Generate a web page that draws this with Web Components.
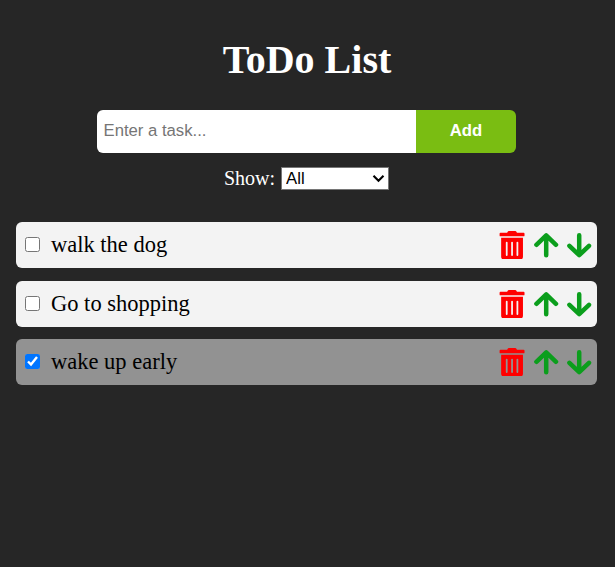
<!DOCTYPE html>
<html lang="en">
<head>
<meta charset="utf-8">
<title>ToDo List</title>
<style>
body{margin:0;background:#262626;font-family:"Liberation Serif","Times New Roman",serif}
todo-item[done]{margin-top:-1px}
</style>
</head>
<body>
<todo-app>
  <todo-item>walk the dog</todo-item>
  <todo-item>Go to shopping</todo-item>
  <todo-item done>wake up early</todo-item>
</todo-app>
<script>
class TodoIcon extends HTMLElement {
  connectedCallback() {
    const shapes = {
      trash: '<svg width="26" height="28.5" viewBox="10 0 466 512" fill="#f00"><path transform="translate(20)" d="M28 464a48 48 0 0 0 48 48h296a48 48 0 0 0 48-48V122H28zm276-256a16 16 0 0 1 32 0v224a16 16 0 0 1-32 0zm-96 0a16 16 0 0 1 32 0v224a16 16 0 0 1-32 0zm-96 0a16 16 0 0 1 32 0v224a16 16 0 0 1-32 0zM432 32H312l-9.4-18.7A24 24 0 0 0 281.1 0H166.8a23.7 23.7 0 0 0-21.4 13.3L136 32H16A16 16 0 0 0 0 48v32a16 16 0 0 0 16 16h416a16 16 0 0 0 16-16V48a16 16 0 0 0-16-16z"/></svg>',
      up: '<svg width="25" height="28" viewBox="0 0 25 28" fill="none" stroke="#0b9e1c" stroke-width="4.5" stroke-linecap="round" stroke-linejoin="round"><path d="M12.2 24.3V5M2.4 13.8L12.2 4.4L22 13.8"/></svg>',
      down: '<svg width="25" height="28" viewBox="0 0 25 28" fill="none" stroke="#0b9e1c" stroke-width="4.5" stroke-linecap="round" stroke-linejoin="round"><path d="M12.2 4.3V24M2.4 14.8L12.2 24.2L22 14.8"/></svg>'
    };
    this.attachShadow({mode: 'open'}).innerHTML =
      '<style>:host{display:block}svg{display:block}</style>' + shapes[this.getAttribute('name')];
  }
}
customElements.define('todo-icon', TodoIcon);

class TodoItem extends HTMLElement {
  connectedCallback() {
    this.attachShadow({mode: 'open'}).innerHTML = `
      <style>
        :host{display:flex;align-items:center;box-sizing:border-box;height:46px;padding:0 5px 0 9px;border-radius:6px;background:#f3f3f3;color:#000}
        :host([done]){background:#929292}
        input{width:15px;height:15px;margin:0 11px 1px 0;flex:none}
        .name{flex:1;font-size:22.5px;line-height:28px;padding-bottom:.8px}
        .actions{display:flex;gap:9px;align-items:center}
        .arrows{display:flex;gap:8px}
      </style>
      <input type="checkbox" ${this.hasAttribute('done') ? 'checked' : ''}>
      <span class="name"><slot></slot></span>
      <div class="actions">
        <todo-icon name="trash"></todo-icon>
        <div class="arrows"><todo-icon name="up"></todo-icon><todo-icon name="down"></todo-icon></div>
      </div>`;
  }
}
customElements.define('todo-item', TodoItem);

class TodoForm extends HTMLElement {
  connectedCallback() {
    this.attachShadow({mode: 'open'}).innerHTML = `
      <style>
        :host{display:flex;width:419px;height:43px}
        input{box-sizing:border-box;width:319px;border:0;margin:0;padding:0 6.5px 2px;border-radius:6px 0 0 6px;background:#fff;font:16.7px "Liberation Sans",Arial,sans-serif}
        input::placeholder{color:#757575}
        button{width:100px;border:0;margin:0;padding:0 0 2px;border-radius:0 6px 6px 0;background:#7abd12;color:#fff;font:bold 16.7px "Liberation Sans",Arial,sans-serif}
      </style>
      <input type="text" placeholder="Enter a task..."><button>Add</button>`;
  }
}
customElements.define('todo-form', TodoForm);

class TodoFilter extends HTMLElement {
  connectedCallback() {
    this.attachShadow({mode: 'open'}).innerHTML = `
      <style>
        :host{display:flex;align-items:center;gap:6px;color:#fff;font-size:20px;line-height:23px}
        .pick{display:grid;align-items:center}
        .pick>*{grid-area:1/1}
        svg{justify-self:end;margin-right:4px;pointer-events:none}
        select{appearance:none;box-sizing:border-box;width:108px;height:23px;margin:0;padding:0 4px;border:1px solid #767676;border-radius:0;background:#fff;color:#000;font:16.7px "Liberation Sans",Arial,sans-serif}
      </style>
      <label for="f">Show:</label>
      <div class="pick">
        <select id="f"><option>All</option><option>Completed</option></select>
        <svg width="13" height="9" viewBox="0 0 13 9" fill="none" stroke="#000" stroke-width="2.1"><path d="M1.5 1.7L6.5 6.7L11.5 1.7"/></svg>
      </div>`;
  }
}
customElements.define('todo-filter', TodoFilter);

class TodoApp extends HTMLElement {
  connectedCallback() {
    this.attachShadow({mode: 'open'}).innerHTML = `
      <style>
        :host{display:flex;flex-direction:column;align-items:center;box-sizing:border-box;width:615px;height:567px;padding:37px 17px 0 16px}
        h1{margin:0 0 27px;color:#fff;font-size:40px;line-height:46px}
        todo-form,todo-filter{margin-right:1px}
        todo-filter{margin-top:14px;margin-bottom:32px}
        .list{display:flex;flex-direction:column;gap:13px;width:581px;align-self:flex-start}
      </style>
      <h1>ToDo List</h1>
      <todo-form></todo-form>
      <todo-filter></todo-filter>
      <div class="list"><slot></slot></div>`;
  }
}
customElements.define('todo-app', TodoApp);
</script>
</body>
</html>
